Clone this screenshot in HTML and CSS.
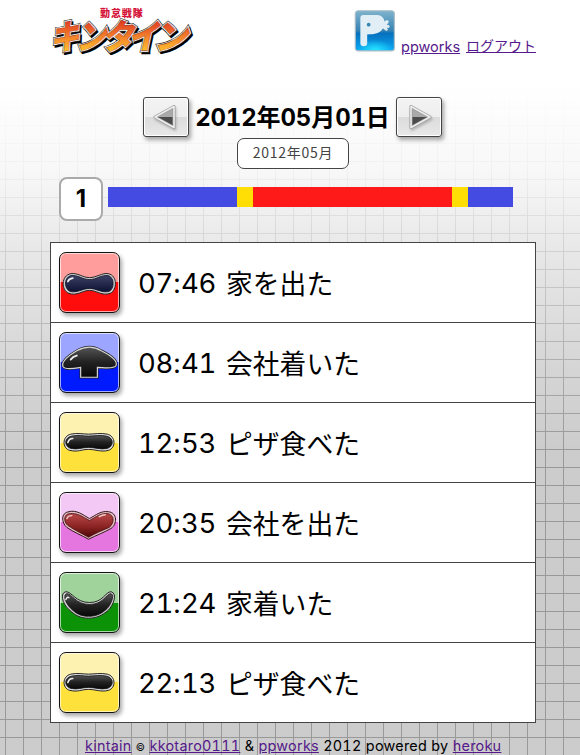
FILE: index.html
```html
<!DOCTYPE html>
<html lang="ja">
<head>
<meta charset="utf-8">
<title>キンタイン</title>
<link rel="stylesheet" href="styles.css">
</head>
<body>
<svg class="defs" width="0" height="0" aria-hidden="true">
  <defs>
    <linearGradient id="dark" x1="0" y1="0" x2="0" y2="1"><stop offset="0" stop-color="#555"/><stop offset=".5" stop-color="#222"/><stop offset="1" stop-color="#080808"/></linearGradient>
    <linearGradient id="navy" x1="0" y1="0" x2="0" y2="1"><stop offset="0" stop-color="#3d4266"/><stop offset="1" stop-color="#0d1233"/></linearGradient>
    <linearGradient id="wine" x1="0" y1="0" x2="0" y2="1"><stop offset="0" stop-color="#b84848"/><stop offset=".55" stop-color="#8c2424"/><stop offset="1" stop-color="#4d0606"/></linearGradient>
    <g id="bar-shape">
      <path d="M12 21.500C19 20 24 21.500 30 21.500S42 20 49 21.500C58 23.500 58 36 50 38C43 40 37 37 30 37S19 40 11 38C3 36 3 23.500 12 21.500Z" fill="#ddd" stroke="#222" stroke-width="1"/>
      <path d="M13 23.500C19 22 24 23.500 30 23.500S42 22 48 23.500C56 25 56 34 49 36C42 37.500 37 35 30 35S19 37.500 12 36C5 34 5 25 13 23.500Z" fill="url(#dark)" stroke="#111" stroke-width=".8"/>
      <path d="M9 30C10 27 12 26 14 26" fill="none" stroke="#eee" stroke-width="1.600" stroke-linecap="round"/>
    </g>
  </defs>
</svg>
<div class="page">
  <header class="header">
    <svg class="logo" width="150" height="53" viewBox="50 2 150 53" role="img">
      <defs><linearGradient id="fire" x1="0" y1="0" x2="0" y2="1"><stop offset=".15" stop-color="#dc2820"/><stop offset=".5" stop-color="#f0752a"/><stop offset=".85" stop-color="#ffc22e"/></linearGradient>
      <g id="logo-word">
        <text transform="translate(50 49) skewX(-12) scale(.86 1)">キ</text>
        <text transform="translate(75.500 49) skewX(-12) scale(.9 1)">ン</text>
        <text transform="translate(101.500 49) skewX(-12) scale(.96 1)">タ</text>
        <text transform="translate(128 49) skewX(-12) scale(.9 1)">イ</text>
        <text transform="translate(153.500 49) skewX(-12) scale(1.02 1)">ン</text>
      </g></defs>
      <text class="logo-small" x="100" y="17">勤怠戦隊</text>
      <use class="word shadow" href="#logo-word" x="1.5" y="1.5"/>
      <use class="word outline" href="#logo-word"/>
      <use class="word rim" href="#logo-word"/>
      <use class="word face" href="#logo-word"/>
    </svg>
    <div class="account">
      <svg class="avatar" width="42" height="42" viewBox="0 0 42 43">
        <defs><linearGradient id="sky" x1="0" y1="0" x2="0" y2="1"><stop offset="0" stop-color="#7fb4cc"/><stop offset=".5" stop-color="#3582b4"/><stop offset=".56" stop-color="#0870bd"/><stop offset="1" stop-color="#08a8f5"/></linearGradient>
        <radialGradient id="glow" cx=".5" cy="1" r=".5"><stop offset="0" stop-color="#25e5ff"/><stop offset="1" stop-color="#25e5ff" stop-opacity="0"/></radialGradient></defs>
        <rect x=".8" y=".8" width="40" height="41" rx="3" fill="url(#sky)" stroke="#a9bdc8" stroke-width="1.2"/>
        <rect x="1.5" y="20" width="39" height="21" fill="url(#glow)"/>
        <path d="M6 8Q6 5 9 5H23C28 5 30 8 31 12C32 10 35 10 35 12C35 13 34 14 33 15C35 15 36 16 36 17C36 18 35 19 33 18C35 20 34 22 32 21C30 20 30 19 29 19C26 24 21 25 13 25V34Q13 37 9.500 37Q6 37 6 34Z" fill="#e1eef6"/>
        <circle cx="14.500" cy="15" r="1.900" fill="#3586b0"/>
      </svg>
      <a class="user-link" href="#">ppworks</a>
      <a class="logout" href="#">ログアウト</a>
    </div>
  </header>

  <nav class="date-nav">
    <a class="arrow" href="#"><svg width="43" height="37" viewBox="0 0 43 37"><path d="M11 19L30 8.500V29.500Z" fill="#aaa"/><path d="M11 19H30V29.500Z" fill="#4c4c4c"/><path d="M11 19L30 8.500V29.500Z" fill="none" stroke="#999" stroke-width="3" stroke-linejoin="round"/><path d="M11 19L30 8.500V29.500Z" fill="none" stroke="#eee" stroke-width="1.600" stroke-linejoin="round"/></svg></a>
    <h1 class="date"><span class="num">2012</span>年<span class="num">05</span>月<span class="num">01</span>日</h1>
    <a class="arrow" href="#"><svg width="43" height="37" viewBox="0 0 43 37"><path d="M33 19L14 8.500V29.500Z" fill="#aaa"/><path d="M33 19H14V29.500Z" fill="#4c4c4c"/><path d="M33 19L14 8.500V29.500Z" fill="none" stroke="#999" stroke-width="3" stroke-linejoin="round"/><path d="M33 19L14 8.500V29.500Z" fill="none" stroke="#eee" stroke-width="1.600" stroke-linejoin="round"/></svg></a>
  </nav>
  <a class="month" href="#">2012年05月</a>

  <div class="day">
    <span class="day-number">1</span>
    <div class="timeline">
      <i class="home" style="width:129px"></i><i class="move" style="width:16px"></i><i class="work" style="width:199px"></i><i class="move" style="width:16px"></i><i class="home" style="width:45px"></i>
    </div>
  </div>

  <ul class="log">
    <li><span class="badge red"><svg viewBox="1 0 61 61">
      <path d="M12 21C19 20 24 25 31 25S44 20 50 21C60 23 59 38 52 41C44 44 38 38 31 38S18 44 10 41C2 38 2 23 12 21Z" fill="#ccc" stroke="#222"/>
      <path d="M12 23C19 22 24 27 31 27S43 22 50 23C57 25 56 37 51 39C44 41 38 36 31 36S18 41 11 39C5 36 5 25 12 23Z" fill="url(#navy)" stroke="#0a0d22" stroke-width=".8"/><path d="M9 29Q10 26 14 25.500" fill="none" stroke="#eee" stroke-width="1.800" stroke-linecap="round"/></svg></span><span class="time"><span>07</span>:<span>46</span></span><span>家を出た</span></li>
    <li><span class="badge blue"><svg viewBox="1 0 61 61">
      <path d="M4 34C2 29 11 22 18 18C27 13 35 13 43 18C51 22 60 28 58 33C56 37 45 35 39 35V45H22V35C16 36 6 38 4 34Z" fill="#222" stroke="#222" stroke-width="2.500"/><path d="M4 34C2 29 11 22 18 18C27 13 35 13 43 18C51 22 60 28 58 33C56 37 45 35 39 35V45H22V35C16 36 6 38 4 34Z" fill="url(#dark)" stroke="#d5d5d5" stroke-width="1.200"/><path d="M12 27Q14 24 18 23" fill="none" stroke="#eee" stroke-width="2" stroke-linecap="round"/></svg></span><span class="time"><span>08</span>:<span>41</span></span><span>会社着いた</span></li>
    <li><span class="badge yellow"><svg viewBox="1 0 61 61"><use href="#bar-shape"/></svg></span><span class="time"><span>12</span>:<span>53</span></span><span>ピザ食べた</span></li>
    <li><span class="badge pink"><svg viewBox="1 0 61 61">
      <path d="M31 26C38 22 43 18 50 19C60 20 59 32 53 36C46 40 38 43 30 47C23 43 15 40 8 35C2 30 2 20 10 19C18 17 24 22 31 26Z" fill="#e6bcc6" stroke="#301515"/><path d="M31 28C38 24 43 20 50 21C57 23 56 31 51 35C44 38 37 41 30 45C23 41 16 38 9 33C4 29 5 21 11 21C18 20 24 24 31 28Z" fill="url(#wine)" stroke="#421010" stroke-width=".8"/><path d="M8 26Q9 23 13 23M41 24Q44 22 47 22" fill="none" stroke="#f1cccc" stroke-width="1.500" stroke-linecap="round"/></svg></span><span class="time"><span>20</span>:<span>35</span></span><span>会社を出た</span></li>
    <li><span class="badge green"><svg viewBox="1 0 61 61">
      <path d="M7 19C13 19 17 30 31 30S47 19 53 19C60 21 55 33 50 38C44 43 38 46 30 46S16 43 10 37C3 31 1 20 7 19Z" fill="#ccc" stroke="#222"/><path d="M8 21C13 21 17 32 31 32S48 21 53 21C57 23 52 33 49 36C44 41 38 44 30 44S17 41 12 36C6 30 4 22 8 21Z" fill="url(#dark)" stroke="#111" stroke-width=".8"/><path d="M7 27Q8 24 10 25" fill="none" stroke="#eee" stroke-width="1.500" stroke-linecap="round"/></svg></span><span class="time"><span>21</span>:<span>24</span></span><span>家着いた</span></li>
    <li><span class="badge yellow"><svg viewBox="1 0 61 61"><use href="#bar-shape"/></svg></span><span class="time"><span>22</span>:<span>13</span></span><span>ピザ食べた</span></li>
  </ul>

  <footer class="footer"><a href="#">kintain</a> <small>©</small> <a href="#">kkotaro<span class="digits">0111</span></a> &amp; <a href="#">ppworks</a> <span class="digits">2012</span> powered by <a href="#">heroku</a></footer>
</div>
</body>
</html>
```

FILE: styles.css
```css
* { box-sizing: border-box; }
html { height: 755px; overflow: hidden; background: #ccc; }
body {
  margin: 0;
  height: 755px;
  overflow: hidden;
  font-family: "Noto Sans CJK JP", sans-serif;
  color: #000;
  background:
    linear-gradient(#fff 85px, rgba(255,255,255,.86) 170px, rgba(255,255,255,.55) 250px, rgba(255,255,255,.18) 370px, rgba(255,255,255,0) 450px),
    linear-gradient(90deg, transparent 5px, #999 5px, #999 6px, transparent 6px) 0 0 / 18px 18px,
    linear-gradient(transparent 17px, #999 17px) 0 0 / 18px 18px,
    #ccc;
}
.defs { position: absolute; }
a { color: #551a8b; }
.page { width: 486px; margin-left: 50px; }

.header { display: flex; justify-content: space-between; height: 97px; padding-top: 2px; }
.logo { display: block; }
.logo text { font-family: "Noto Sans CJK JP", sans-serif; font-weight: 900; }
.logo .logo-small { font-size: 10px; letter-spacing: .9px; fill: #d5153a; }
.word { font-size: 34px; stroke-linejoin: miter; }
.shadow { fill: #000; stroke: #000; stroke-width: 3px; }
.outline { fill: #333; stroke: #333; stroke-width: 3.4px; }
.rim { fill: #fff; stroke: #fff; stroke-width: 2px; }
.face { fill: url(#fire); stroke: #8b2c10; stroke-width: .4px; }
.account { display: flex; align-items: flex-start; padding-top: 5px; font-size: 14px; line-height: 20px; }
.avatar { display: block; margin: 3px 5px 0 0; }
.account a { margin-top: 29px; }
.user-link { width: 60px; margin-right: 5px; font-family: Inter, sans-serif; font-size: 14.5px; line-height: 21px; white-space: nowrap; }
.account .logout { width: 70px; margin-top: 28px; white-space: nowrap; }

.date-nav { display: flex; justify-content: space-between; width: 299px; height: 40px; margin-left: 93px; }
.arrow {
  width: 46px; height: 40px;
  border: 1.5px solid #444; border-radius: 3px;
  background: linear-gradient(#f3f3f3 0, #eee 50%, #dcdcdc 51%, #e8e8e8 100%);
  box-shadow: 2px 3px 4px rgba(0,0,0,.35), inset 0 0 0 1px #fff;
}
.arrow svg { display: block; filter: drop-shadow(1px 2px 1px rgba(0,0,0,.2)); }
.date { margin: 0; font-size: 24px; line-height: 37px; font-weight: 700; white-space: nowrap; }
.date .num { font-family: Inter, sans-serif; font-variant-numeric: tabular-nums; font-size: 24px; letter-spacing: -.2px; }
.month {
  display: block; width: 112px; height: 31px; margin: 1px 0 0 187px;
  border: 1px solid #444; border-radius: 7px; background: #fff;
  color: #444; text-align: center; text-decoration: none; font-size: 14px; line-height: 27px; letter-spacing: .75px;
}

.day { display: flex; margin: 8px 0 0 9px; height: 44px; }
.day-number {
  width: 44px; height: 44px; border: 2px solid #aaa; border-radius: 8px; background: #fff;
  font-family: Inter, sans-serif; font-size: 24px; font-weight: 700; line-height: 40px; text-align: center;
}
.timeline { display: flex; height: 20px; margin: 10px 0 0 5px; }
.timeline i { display: block; }
.home { background: #444be2; }
.move { background: #ffde05; }
.work { background: #ff1a1a; }

.log { list-style: none; margin: 21px 0 0; padding: 0; background: #fff; border: 1px solid #444; }
.log li { display: flex; height: 80px; padding: 9px 0 0 8px; border-bottom: 1px solid #444; font-size: 26.8px; line-height: 61px; white-space: nowrap; }
.log li:last-child { border-bottom: 0; height: 79px; }
.time { width: 88px; font-family: Inter, sans-serif; font-size: 27.5px; line-height: 63px; }
.time span { font-variant-numeric: tabular-nums; letter-spacing: -.3px; }
.badge {
  width: 61px; height: 61px; margin-right: 18px; border: 1px solid #111; border-radius: 7px;
  box-shadow: 2px 3px 4px rgba(0,0,0,.35), inset 0 0 0 1px rgba(255,255,255,.65);
}
.badge svg { display: block; width: 60px; height: 60px; }
.red { background: linear-gradient(#ff9c9c 50%, #ff0d0d 50%); }
.blue { background: linear-gradient(#9ca5ff 50%, #001aff 50%); }
.yellow { background: linear-gradient(#fdf2b0 50%, #ffe13c 50%); }
.pink { background: linear-gradient(#f4c8f4 50%, #e576df 50%); }
.green { background: linear-gradient(#a0d39c 50%, #0b9207 50%); }

.footer { width: 420px; margin: 12px 0 0 35px; font-family: Inter, sans-serif; font-size: 14.4px; line-height: 22px; letter-spacing: .25px; white-space: nowrap; }
.footer small { font-size: 10px; }
.digits { font-variant-numeric: tabular-nums; }
```
